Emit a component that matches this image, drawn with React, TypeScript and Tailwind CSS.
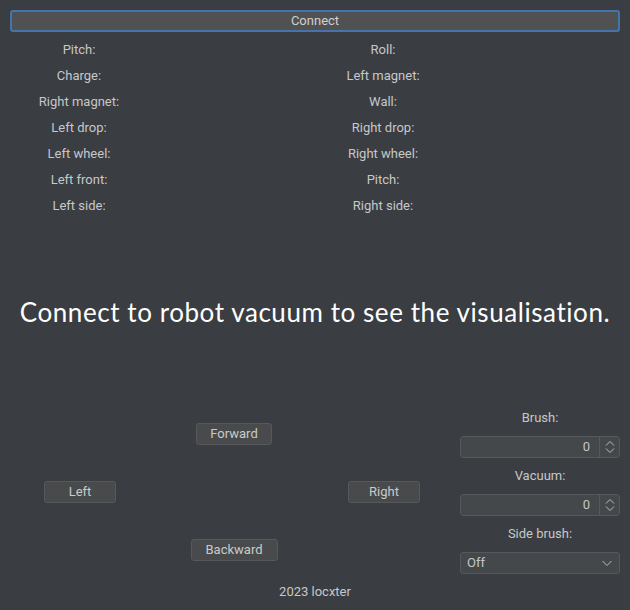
import React from "react";

const labelsLeft = ["Pitch:", "Charge:", "Right magnet:", "Left drop:", "Left wheel:", "Left front:", "Left side:"];
const labelsRight = ["Roll:", "Left magnet:", "Wall:", "Right drop:", "Right wheel:", "Pitch:", "Right side:"];

function Btn({ children, w }: { children: React.ReactNode; w: string }) {
  return (
    <div className={`${w} h-[22px] flex items-center justify-center rounded-[3px] border border-[#56585b] bg-[#494a4c] text-[#cacaca] text-[13px]`}>
      {children}
    </div>
  );
}

function Spin() {
  return (
    <div className="w-[160px] h-[22px] flex rounded-[3px] border border-[#56595c] bg-[#45484b]">
      <div className="flex-1 flex items-center justify-end pr-[9px] text-[13px] text-[#c4c4c4]">0</div>
      <div className="w-[20px] border-l border-[#56595c] flex items-center justify-center">
        <svg width="12" height="14" viewBox="0 0 12 14" fill="none" stroke="#bcbcbc" strokeWidth="1">
          <path d="M2 5.5 L6 1.5 L10 5.5" />
          <path d="M2 8.5 L6 12.5 L10 8.5" />
        </svg>
      </div>
    </div>
  );
}

export default function App() {
  return (
    <div className="w-[630px] h-[610px] bg-[#3a3d41] flex flex-col overflow-hidden" style={{ fontFamily: "Roboto, 'Liberation Sans', sans-serif" }}>
      <div className="px-[10px] pt-[10px] shrink-0">
        <div className="h-[22px] rounded-[3px] border-2 border-[#4673aa] bg-[#505152] flex items-center justify-center text-[13px] text-[#d0d0d0]">
          Connect
        </div>
      </div>
      <div className="flex px-[10px] pt-[5px] shrink-0">
        <div className="w-[305px] flex flex-col">
          {labelsLeft.map((l, i) => (
            <div key={i} className="h-[26px] flex items-center">
              <div className="w-[138px] text-center text-[13px] text-[#c6c8ca]">{l}</div>
            </div>
          ))}
        </div>
        <div className="w-[305px] flex flex-col">
          {labelsRight.map((l, i) => (
            <div key={i} className="h-[26px] flex items-center">
              <div className="w-[136px] text-center text-[13px] text-[#c6c8ca]">{l}</div>
            </div>
          ))}
        </div>
      </div>
      <div className="h-[184px] shrink-0 flex items-center justify-center pt-[3px]">
        <div className="text-white text-[26px] tracking-[0.57px]" style={{ fontFamily: "Lato, sans-serif" }}>
          Connect to robot vacuum to see the visualisation.
        </div>
      </div>
      <div className="flex shrink-0">
        <div className="w-[456px] pl-[4px] grid grid-cols-[152px_152px_152px] grid-rows-[58px_58px_58px] pt-[2px]">
          <div />
          <div className="flex items-center justify-center pl-[4px]"><Btn w="w-[76px]">Forward</Btn></div>
          <div />
          <div className="flex items-center justify-center"><Btn w="w-[72px]">Left</Btn></div>
          <div />
          <div className="flex items-center justify-center"><Btn w="w-[72px]">Right</Btn></div>
          <div />
          <div className="flex items-center justify-center pl-[4px]"><Btn w="w-[87px]">Backward</Btn></div>
          <div />
        </div>
        <div className="flex flex-col items-center pl-[4px]">
          <div className="h-[29px] flex items-center text-[13px] text-[#c6c8ca]">Brush:</div>
          <div className="h-[29px] flex items-center"><Spin /></div>
          <div className="h-[29px] flex items-center text-[13px] text-[#c6c8ca]">Vacuum:</div>
          <div className="h-[29px] flex items-center"><Spin /></div>
          <div className="h-[29px] flex items-center text-[13px] text-[#c6c8ca]">Side brush:</div>
          <div className="h-[29px] flex items-center">
            <div className="w-[160px] h-[22px] flex items-center rounded-[3px] border border-[#56595c] bg-[#45484b] pl-[6px] pr-[6px] text-[13px] text-[#c4c4c4]">
              <span className="flex-1">Off</span>
              <svg width="12" height="8" viewBox="0 0 12 8" fill="none" stroke="#bcbcbc" strokeWidth="1">
                <path d="M1.5 2 L6 6.5 L10.5 2" />
              </svg>
            </div>
          </div>
        </div>
      </div>
      <div className="flex justify-center pt-[3px] text-[13px] text-[#c6c8ca] shrink-0">2023 locxter</div>
    </div>
  );
}
